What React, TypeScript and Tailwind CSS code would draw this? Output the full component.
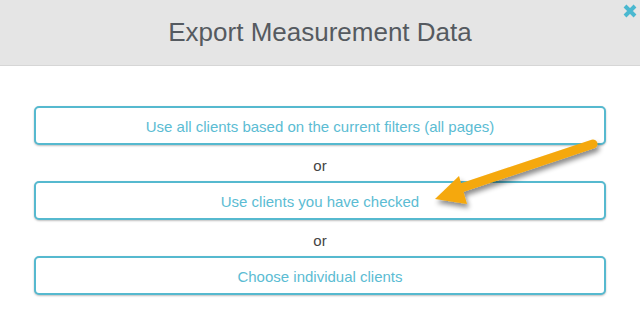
import React from 'react';

const options = [
  'Use all clients based on the current filters (all pages)',
  'Use clients you have checked',
  'Choose individual clients',
];

const App: React.FC = () => {
  return (
    <div className="relative w-[640px] h-[320px] bg-white overflow-hidden font-['Liberation_Sans',Arial,sans-serif]">
      {/* Header */}
      <div className="relative h-[66px] bg-[#e5e5e5] border-b border-[#d6d6d6] flex items-center justify-center">
        <h1 className="text-[26px] text-[#555a60] leading-none pb-[2px]">Export Measurement Data</h1>
        <button className="absolute right-[3px] top-[4px] w-[14px] h-[14px]" aria-label="Close">
          <svg viewBox="0 0 14 14" className="w-[14px] h-[14px]">
            <path d="M2 2 L12 12 M12 2 L2 12" stroke="#4ab8d0" strokeWidth="4" strokeLinecap="butt" />
          </svg>
        </button>
      </div>

      {/* Options */}
      <div className="px-[34px] pt-[40px] flex flex-col">
        {options.map((label, i) => (
          <React.Fragment key={label}>
            {i > 0 && (
              <div className="h-[36px] flex items-center justify-center pt-[7px] text-[15px] text-[#444]">or</div>
            )}
            <button className="h-[39px] w-full rounded-[5px] border-2 border-[#56b9cf] shadow-[0_1px_2px_rgba(0,0,0,0.25)] pt-[3px] text-[15px] text-[#5bbcd3] bg-white">
              {label}
            </button>
          </React.Fragment>
        ))}
      </div>

      {/* Annotation arrow */}
      <svg className="absolute left-0 top-0 pointer-events-none" width="640" height="320">
        <defs>
          <filter id="sh" x="-20%" y="-20%" width="140%" height="160%">
            <feDropShadow dx="2" dy="4" stdDeviation="2.5" floodColor="#000" floodOpacity="0.45" />
          </filter>
        </defs>
        <g filter="url(#sh)">
          <line x1="593" y1="144" x2="455" y2="190" stroke="#f5a80b" strokeWidth="9" strokeLinecap="round" />
          <polygon points="435,199 459,176 467,204" fill="#f5a80b" />
        </g>
      </svg>
    </div>
  );
};

export default App;
